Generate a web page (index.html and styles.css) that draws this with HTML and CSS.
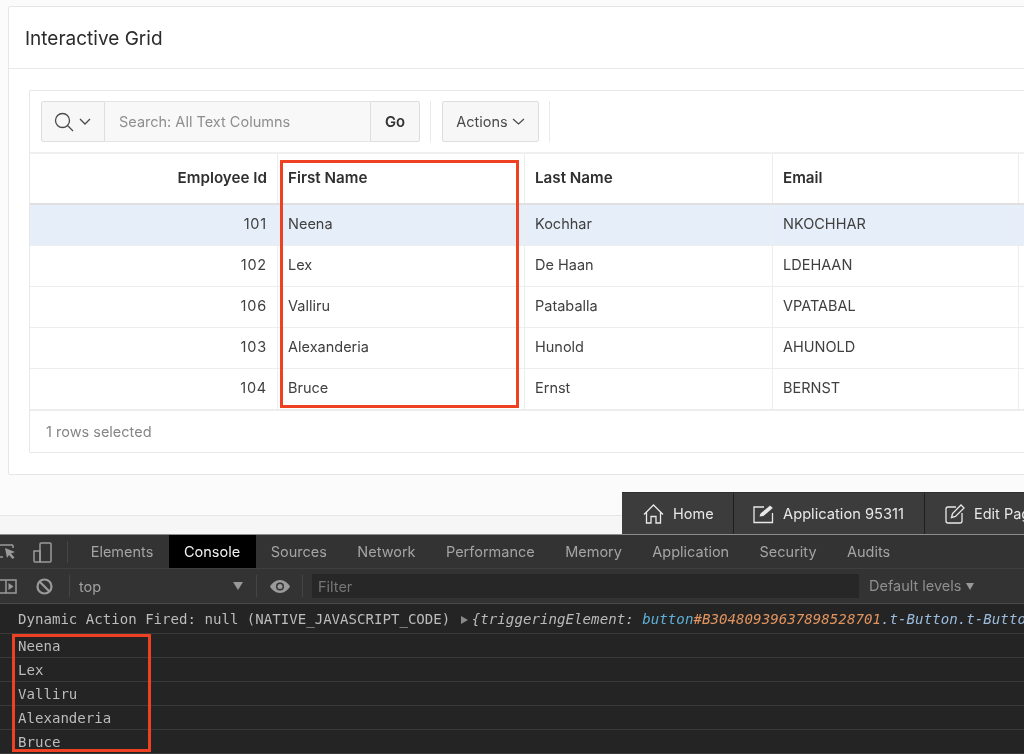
FILE: index.html
```html
<!DOCTYPE html>
<html lang="en">
<head>
<meta charset="utf-8">
<title>Interactive Grid</title>
<link rel="stylesheet" href="styles.css">
</head>
<body>
<main class="page">
  <section class="card">
    <h1 class="card-title">Interactive Grid</h1>
    <div class="card-body">
      <div class="ig">
        <div class="ig-toolbar">
          <div class="search">
            <button class="search-menu">
              <svg class="ic-search" width="22" height="22" viewBox="0 0 22 22" fill="none" stroke="#4a4a4a" stroke-width="1.3"><circle cx="9.5" cy="9.5" r="7"/><path d="M14.5 14.5l5.5 5.5"/></svg>
              <svg width="12" height="7" viewBox="0 0 12 7" fill="none" stroke="#4a4a4a" stroke-width="1.3"><path d="M1 1l5 5 5-5"/></svg>
            </button>
            <div class="search-input">Search: All Text Columns</div>
            <button class="go">Go</button>
          </div>
          <span class="tb-sep"></span>
          <button class="actions">Actions
            <svg width="13" height="7" viewBox="0 0 13 7" fill="none" stroke="#4a4a4a" stroke-width="1.2"><path d="M1 1l5.500 5 5.500-5"/></svg>
          </button>
          <span class="tb-sep"></span>
        </div>
        <div class="row head">
          <div class="cell right">Employee Id</div><div class="cell">First Name</div><div class="cell">Last Name</div><div class="cell">Email</div><div class="cell"></div>
        </div>
        <div class="row selected">
          <div class="cell num">101</div><div class="cell">Neena</div><div class="cell">Kochhar</div><div class="cell">NKOCHHAR</div><div class="cell"></div>
        </div>
        <div class="row">
          <div class="cell num">102</div><div class="cell">Lex</div><div class="cell">De Haan</div><div class="cell">LDEHAAN</div><div class="cell"></div>
        </div>
        <div class="row">
          <div class="cell num">106</div><div class="cell">Valliru</div><div class="cell">Pataballa</div><div class="cell">VPATABAL</div><div class="cell"></div>
        </div>
        <div class="row">
          <div class="cell num">103</div><div class="cell">Alexanderia</div><div class="cell">Hunold</div><div class="cell">AHUNOLD</div><div class="cell"></div>
        </div>
        <div class="row last">
          <div class="cell num">104</div><div class="cell">Bruce</div><div class="cell">Ernst</div><div class="cell">BERNST</div><div class="cell"></div>
        </div>
        <div class="ig-foot">1 rows selected</div>
      </div>
    </div>
  </section>
</main>
<div class="page-strip"></div>

<section class="devtools">
  <nav class="dt-tabs">
    <div class="dt-icons">
      <svg width="22" height="20" viewBox="0 0 22 20" fill="none" stroke="#9a9a9a" stroke-width="1.5"><path d="M0 3h15M15 3v3M0 15h5"/><path d="M7 6l10 4-4 1.500 3.500 4-2 1.500-3.500-4-2 3z" fill="#9a9a9a" stroke="none"/></svg>
      <svg width="20" height="21" viewBox="0 0 20 21" fill="none" stroke="#9a9a9a" stroke-width="1.5"><rect x="7" y="1" width="11" height="19" rx="1"/><path d="M1 9h6v11H2a1 1 0 0 1-1-1z"/></svg>
    </div>
    <span class="dt-sep"></span>
    <a class="tab">Elements</a><a class="tab active">Console</a><a class="tab">Sources</a><a class="tab">Network</a><a class="tab">Performance</a><a class="tab">Memory</a><a class="tab">Application</a><a class="tab">Security</a><a class="tab">Audits</a>
  </nav>
  <div class="dt-bar">
    <svg class="ic-drawer" width="17" height="15" viewBox="0 0 17 15" fill="none" stroke="#9a9a9a" stroke-width="1.5"><path d="M0 1h16v13H0M6 1v13"/><path d="M8.500 4l5 3.500-5 3.500z" fill="#9a9a9a" stroke="none"/></svg>
    <svg class="ic-clear" width="17" height="17" viewBox="0 0 17 17" fill="none" stroke="#9a9a9a" stroke-width="2.2"><circle cx="8.500" cy="8.500" r="7"/><path d="M3.500 3.500l10 10"/></svg>
    <span class="dt-sep bar-sep"></span>
    <div class="ctx">top <span class="tri"></span></div>
    <span class="dt-sep"></span>
    <svg class="ic-eye" width="20" height="13" viewBox="0 0 20 13"><path d="M10 0C5.500 0 2 3 0 6.500 2 10 5.500 13 10 13s8-3 10-6.500C18 3 14.500 0 10 0z" fill="#9a9a9a"/><circle cx="10" cy="6.500" r="4" fill="#333"/><circle cx="10" cy="6.500" r="2.500" fill="#9a9a9a"/></svg>
    <span class="dt-sep"></span>
    <div class="filter">Filter</div>
    <div class="levels">Default levels <span class="tri small"></span></div>
  </div>
  <div class="console">
    <div class="line first">Dynamic Action Fired: null (NATIVE_JAVASCRIPT_CODE) <span class="expand"></span><em class="obj">{triggeringElement: <span class="k-tag">button</span><span class="k-id">#B30480939637898528701</span><span class="k-cls">.t-Button.t-Butto</span></em></div>
    <div class="line">Neena</div>
    <div class="line">Lex</div>
    <div class="line">Valliru</div>
    <div class="line">Alexanderia</div>
    <div class="line">Bruce</div>
  </div>
</section>

<div class="dev-toolbar">
  <a class="dev-item home">
    <svg width="21" height="20" viewBox="0 0 21 20" fill="none" stroke="#e8e8e8" stroke-width="1.300"><path d="M1 10.500L10.500 1 20 10.500M3.500 8.500V19H8v-6.500h5V19h4.500V8.500"/></svg>
    Home</a>
  <a class="dev-item app">
    <svg width="21" height="20" viewBox="0 0 21 20" fill="none" stroke="#e8e8e8" stroke-width="1.300"><path d="M11 3H1v15.500h18.500V9"/><path d="M6.500 12.500l1-3L17 1.500l2.800 2.500-9.300 8z" fill="#e8e8e8" stroke="none"/></svg>
    Application 95311</a>
  <a class="dev-item edit">
    <svg width="20" height="20" viewBox="0 0 20 20" fill="none" stroke="#e8e8e8" stroke-width="1.300"><path d="M11 3H3a2 2 0 0 0-2 2v12a2 2 0 0 0 2 2h12a2 2 0 0 0 2-2V9"/><path d="M6.500 13.500l1-4L16 1l3 3-8.500 8.500z"/></svg>
    Edit Pag</a>
</div>

<div class="mark mark-grid"></div>
<div class="mark mark-console"></div>
</body>
</html>
```
FILE: styles.css
```css
* { box-sizing: border-box; }
html, body { margin: 0; padding: 0; height: 754px; width: 1024px; overflow: hidden; }
body { position: relative; background: #fafafa; font-family: Inter, "Liberation Sans", sans-serif; color: #404040; display: flex; flex-direction: column; filter: blur(0.35px); }

.page { height: 516px; flex: none; background: #fbfbfb; padding: 6px 0 0 8px; border-bottom: 1px solid #e6e6e6; overflow: hidden; }
.card { width: 1100px; height: 469px; background: #fff; border: 1px solid #e6e6e6; border-radius: 2px; }
.card-title { margin: 0; height: 62px; padding: 0 0 0 16px; line-height: 63px; font-size: 19px; font-weight: 400; color: #2b2b2b; border-bottom: 1px solid #e9e9e9; }
.card-body { padding: 21px 0 0 20px; }
.ig { width: 1060px; height: 363px; border: 1px solid #e8e8e8; border-radius: 1px; }

.ig-toolbar { height: 63px; padding: 10px 0 0 11px; display: flex; align-items: flex-start; gap: 11px; border-bottom: 2px solid #f0f0f0; }
.search { display: flex; height: 41px; }
button { font-family: inherit; color: inherit; margin: 0; }
.search-menu { width: 64px; height: 41px; background: #f7f7f7; border: 1px solid #dedede; border-radius: 2px 0 0 2px; display: flex; align-items: center; gap: 4px; padding: 0 0 0 11px; }
.ic-search { flex: none; }
.search-input { width: 265px; height: 41px; background: #f8f8f8; border: 1px solid #e4e4e4; border-left: 0; border-right: 0; padding-left: 14px; line-height: 39px; font-size: 14.500px; color: #8e8e8e; }
.go { width: 50px; height: 41px; background: #f7f7f7; border: 1px solid #dedede; border-radius: 0 2px 2px 0; font-size: 14.800px; font-weight: 600; color: #333; padding: 0; }
.tb-sep { width: 1px; height: 41px; background: #eaeaea; margin-left: -1px; }
.actions { width: 97px; height: 41px; background: #f7f7f7; border: 1px solid #dedede; border-radius: 2px; font-size: 14.500px; padding: 0; display: flex; align-items: center; justify-content: center; gap: 4px; color: #4a4a4a; }

.row { display: grid; grid-template-columns: 248px 247px 248px 246px 1fr; height: 41px; border-bottom: 1px solid #ededed; font-size: 14.500px; }
.row .cell { padding: 0 10px; line-height: 38px; border-right: 1px solid #ededed; }
.row .cell.right { text-align: right; }
.row .cell.num { text-align: right; letter-spacing: 0.800px; }
.row .cell:last-child { border-right: 0; }
.row.head { height: 51px; border-bottom: 2px solid #dfdfdf; font-size: 15.200px; font-weight: 600; color: #2f2f2f; }
.row.head .cell { line-height: 47px; }
.row.selected { background: #e6eef9; height: 41px; }
.row.last { border-bottom: 2px solid #ededed; height: 42px; }
.ig-foot { padding-left: 16px; line-height: 42px; font-size: 14.500px; color: #858585; }

.page-strip { height: 18px; flex: none; background: #f6f6f6; }

.devtools { flex: 1; min-height: 0; background: #242424; color: #a9a9a9; border-top: 1px solid #8d8d8d; display: flex; flex-direction: column; }
.dt-tabs { height: 34px; flex: none; background: #333; border-bottom: 1px solid #3f3f3f; display: flex; align-items: stretch; font-size: 14.500px; }
.dt-icons { width: 69px; display: flex; align-items: center; gap: 13px; margin-left: -2px; flex: none; padding-top: 1px; }
.dt-sep { width: 1px; height: 22px; background: #454545; align-self: center; flex: none; }
.tab { padding: 0 15.200px; line-height: 33px; color: #a4a4a4; flex: none; }
.dt-tabs .dt-sep { margin-right: 7.500px; }
.tab.active { background: #000; color: #f2f2f2; width: 87px; padding: 0; text-align: center; }
.dt-bar { height: 35px; flex: none; background: #333; border-bottom: 1px solid #4a4a4a; display: flex; align-items: center; font-size: 14.500px; color: #a0a0a0; }
.ic-drawer { flex: none; margin-right: 19px; }
.ic-clear { flex: none; margin-right: 16px; }
.bar-sep { margin-right: 9px; }
.ctx { width: 177px; display: flex; justify-content: space-between; align-items: center; padding-right: 13px; flex: none; }
.tri { width: 0; height: 0; border-left: 5.500px solid transparent; border-right: 5.500px solid transparent; border-top: 8px solid #999; }
.tri.small { display: inline-block; border-left-width: 4.500px; border-right-width: 4.500px; border-top-width: 7px; margin-left: 0; vertical-align: 1px; }
.ic-eye { flex: none; margin: 0 12px 0 13px; }
.filter { width: 547px; height: 24px; margin-left: 9px; background: #272727; line-height: 25px; padding-left: 6px; color: #757575; flex: none; }
.levels { margin-left: 10px; white-space: nowrap; color: #8f8f8f; position: relative; top: -1px; }

.console { flex: 1; min-height: 0; font-family: "DejaVu Sans Mono", "Liberation Mono", monospace; font-size: 14.080px; color: #bcbcbc; overflow: hidden; }
.line { height: 24px; line-height: 25px; padding-left: 18px; border-bottom: 1px solid #3a3a3a; white-space: nowrap; overflow: hidden; }
.line.first { height: 30px; line-height: 31px; }
.expand { display: inline-block; width: 0; height: 0; border-top: 4.500px solid transparent; border-bottom: 4.500px solid transparent; border-left: 7px solid #8a8a8a; margin: 0 4px 0 2px; }
.obj { color: #b9b9b9; letter-spacing: 0.050px; }
.k-tag { color: #5db0d7; }
.k-id { color: #e2945f; }
.k-cls { color: #9bbbdc; }

.dev-toolbar { position: absolute; left: 622px; top: 492px; width: 402px; height: 42px; background: #3c3c3c; border-top: 1px solid #2f2f2f; display: flex; color: #e8e8e8; font-size: 14.500px; overflow: hidden; }
.dev-item { display: flex; align-items: center; gap: 9px; padding-left: 21px; border-right: 1px solid #1f1f1f; white-space: nowrap; flex: none; height: 41px; }
.dev-item.home { width: 112px; }
.dev-item.app { width: 191px; padding-left: 19px; gap: 9px; font-size: 14.700px; }
.dev-item.edit { border-right: 0; padding-left: 20px; gap: 9px; }

.mark { position: absolute; border: 3px solid #ee4023; }
.mark-grid { left: 280px; top: 160px; width: 239px; height: 248px; }
.mark-console { left: 12px; top: 634px; width: 139px; height: 118px; }
```
